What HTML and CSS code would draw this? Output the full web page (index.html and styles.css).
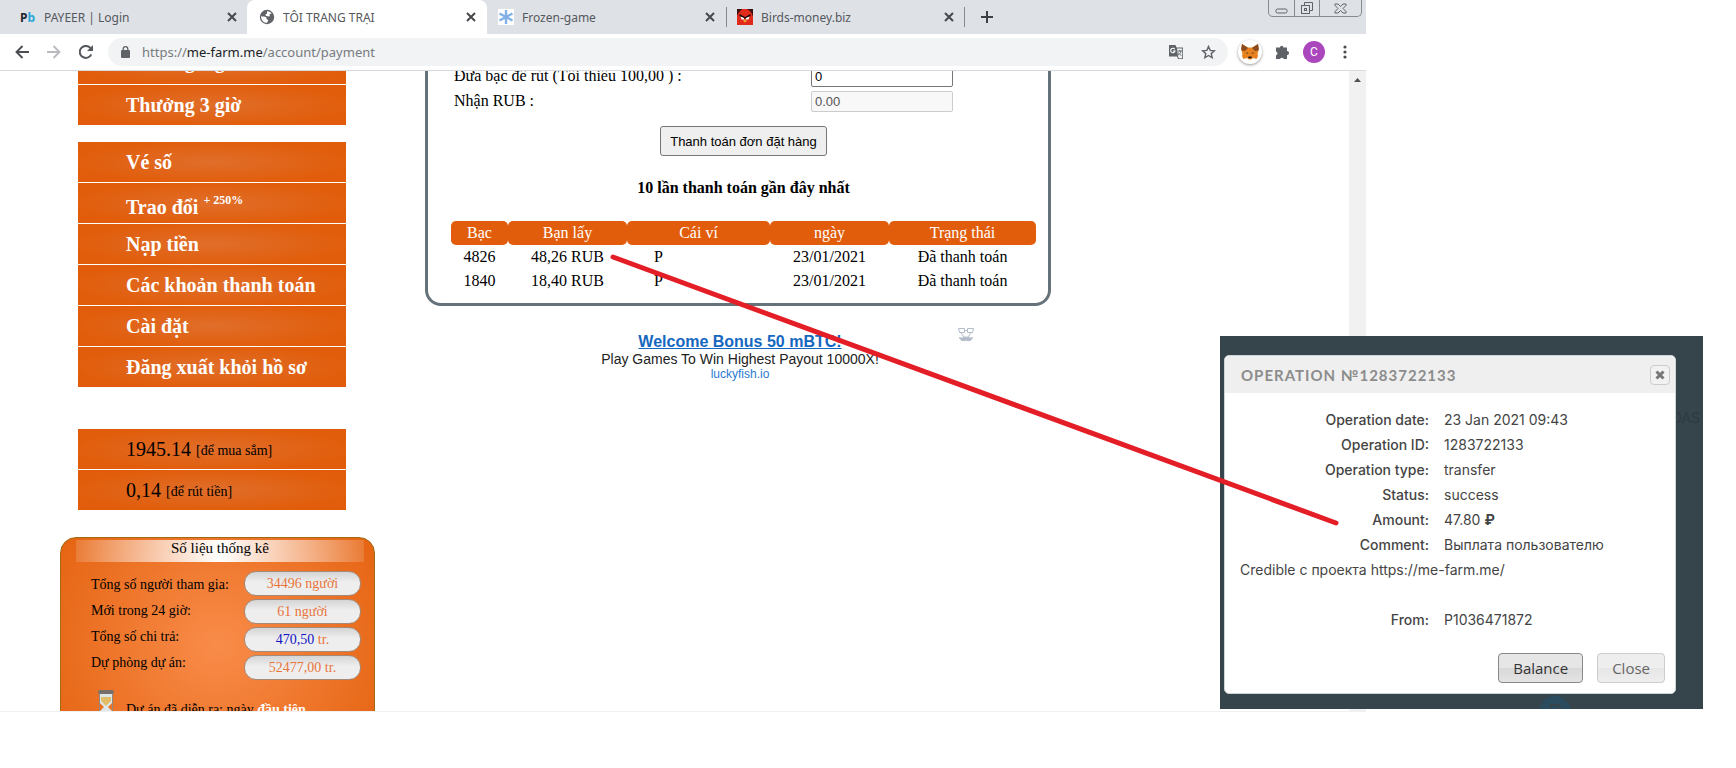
FILE: index.html
```html
<!DOCTYPE html>
<html lang="vi">
<head>
<meta charset="utf-8">
<title>TÔI TRANG TRẠI</title>
<link rel="stylesheet" href="styles.css">
</head>
<body>
<div class="canvas">
  <div class="browser">
    <header class="tabs">
      <div class="tab">
        <span class="favicon pb"><b class="pb-p">P</b><b class="pb-b">b</b></span>
        <span class="tab-title">PAYEER | Login</span>
        <button class="tab-close" aria-label="Close tab"><svg width="10" height="10" viewBox="0 0 10 10"><path d="M1 1l8 8M9 1l-8 8"/></svg></button>
      </div>
      <div class="tab active">
        <svg class="favicon" width="16" height="16" viewBox="0 0 16 16"><circle cx="8" cy="8" r="7.2" fill="#5f6368"/><path d="M2.200 7c1.500 1 3.300.2 4.800 1 .9.600 0 1.500.8 2.300.7.600 1.600.2 1.400 1.300-.1.800-.9 1-1 2.200C4.500 14 1.800 11 2.200 7zM8 2.200c2 0 3.500.8 4.700 2.300-.8.300-1.500 0-2 .7-.4.800.6 1.400-.2 2-.9.600-1.600-.2-2.600-.2-.9 0-1.700-.6-1.300-1.500.3-.7 1.300-.4 1.500-1.200.1-.700-.4-1.300-.1-2.100z" fill="#fff"/></svg>
        <span class="tab-title">TÔI TRANG TRẠI</span>
        <button class="tab-close" aria-label="Close tab"><svg width="10" height="10" viewBox="0 0 10 10"><path d="M1 1l8 8M9 1l-8 8"/></svg></button>
      </div>
      <div class="tab">
        <svg class="favicon" width="16" height="16" viewBox="0 0 16 16"><path fill="#fff" d="M0 0h16v16H0z"/><path d="M8 1v14M1.500 4.500l13 7M14.500 4.500l-13 7" stroke="#82b1e8" stroke-width="2.400"/></svg>
        <span class="tab-title">Frozen-game</span>
        <button class="tab-close" aria-label="Close tab"><svg width="10" height="10" viewBox="0 0 10 10"><path d="M1 1l8 8M9 1l-8 8"/></svg></button>
      </div>
      <div class="tab ruled">
        <svg class="favicon" width="16" height="16" viewBox="0 0 16 16"><path fill="#3b0f0c" d="M0 0h16v16H0z"/><path fill="#e02a1c" d="M0 16V7C2 2 4 2 5 0h5c2 1 5 3 6 8v8z"/><path fill="#1d0a08" d="M2.500 5l5.500 3 5.500-3v2L9 9.500H7L2.500 7z"/><path fill="#fff" d="M3.500 7.500L7 9v1.500H4.500zM12.500 7.500L9 9v1.500h2.500z"/><path fill="#f0a030" d="M8 10l2 2-2 1.500L6 12z"/></svg>
        <span class="tab-title">Birds-money.biz</span>
        <button class="tab-close" aria-label="Close tab"><svg width="10" height="10" viewBox="0 0 10 10"><path d="M1 1l8 8M9 1l-8 8"/></svg></button>
      </div>
      <button class="new-tab" aria-label="New tab"><svg width="12" height="12" viewBox="0 0 12 12"><path d="M6 0v12M0 6h12" stroke="#3c4043" stroke-width="2"/></svg></button>
      <div class="window-buttons">
        <button class="wb" aria-label="Minimize"><svg width="13" height="6" viewBox="0 0 13 6"><rect x="1" y="1" width="11" height="4" rx="1.500"/></svg></button>
        <button class="wb" aria-label="Restore"><svg width="14" height="13" viewBox="0 0 14 13"><path d="M4.500 3.500v-3h8v8h-3"/><rect x="1.500" y="3.500" width="8" height="8"/><rect x="4.500" y="6.500" width="2" height="2"/></svg></button>
        <button class="wb wide" aria-label="Close window"><svg width="13" height="11" viewBox="0 0 13 11"><path d="M1 1h3l2.500 2.500L9 1h3v1.500L9 5.500l3 3V10H9L6.500 7.500 4 10H1V8.500l3-3-3-3z"/></svg></button>
      </div>
    </header>
    <div class="toolbar">
      <button class="icon-btn" aria-label="Back"><svg width="14" height="14" viewBox="0 0 14 14"><path d="M14 7H1.500M7.500 1L1.500 7l6 6" fill="none" stroke="#4a4d51" stroke-width="1.900"/></svg></button>
      <button class="icon-btn" aria-label="Forward"><svg width="14" height="14" viewBox="0 0 14 14"><path d="M0 7h12.500M6.500 1l6 6-6 6" fill="none" stroke="#b9bbbe" stroke-width="1.900"/></svg></button>
      <button class="icon-btn" aria-label="Reload"><svg width="14" height="14" viewBox="0 0 14 14"><path d="M12.300 9.300A6 6 0 1 1 11.500 3.200" fill="none" stroke="#55585c" stroke-width="2"/><path d="M14 0v6H8z" fill="#55585c"/></svg></button>
      <div class="address">
        <svg class="lock" width="9" height="12" viewBox="0 0 9 12"><rect y="4" width="9" height="8" rx="1" fill="#5f6368"/><path d="M2.200 5V3a2.300 2.300 0 0 1 4.600 0v2" fill="none" stroke="#5f6368" stroke-width="1.300"/></svg>
        <span class="url">https://<span class="host">me-farm.me</span>/account/payment</span>
        <svg width="15" height="15" viewBox="0 0 15 15"><path d="M0 0h6.500l1 2.500H14v11.500H9L8 11.500H0z" fill="#5f6368"/><path d="M8 3.500h5.200v9.700H9.700L9 11z" fill="#f1f3f4"/><path d="M5.700 4.200A2.200 2.200 0 1 0 6 6H4" fill="none" stroke="#fff" stroke-width="1.100"/><path d="M8.500 6h4.500M10.800 5v1M12 6c-.4 2-1.500 3.300-3 4M9.500 7.500c.6 1.500 1.600 2.200 2.900 3" fill="none" stroke="#5f6368"/></svg>
        <button class="icon-btn star" aria-label="Bookmark this page"><svg width="15" height="14" viewBox="0 0 15 14"><path d="M7.500 1.500l1.700 3.900 4.200.4-3.200 2.800 1 4.100-3.700-2.200-3.700 2.200 1-4.100L1.600 5.800l4.200-.4z" fill="none" stroke="#5f6368" stroke-width="1.400"/></svg></button>
      </div>
      <button class="fox" aria-label="MetaMask"><svg width="18" height="16" viewBox="0 0 18 16"><path d="M1 0l6 3.500h4L17 0l.8 5-1.300 5 .6 2-1.600 3-3.500-1-2 1.500H8L6 14l-3.500 1L.9 12l.6-2L.2 5z" fill="#e8821e"/><path d="M1 0l6 4-3 3-3.500-.5L.2 5zM17 0l-6 4 3 3 3.500-.5.3-1.500z" fill="#8a4a20"/><path d="M4.500 8.500l2.500.3.200 1.200zM13.500 8.500l-2.500.3-.2 1.200z" fill="#333"/><path d="M7.500 12.500h3l.4 1.800H7.100z" fill="#1b1b1b"/></svg></button>
      <button class="icon-btn" aria-label="Extensions"><svg width="15" height="15" viewBox="0 0 15 15"><path d="M5 2.500a1.700 1.700 0 0 1 3.400 0H12V6a2 2 0 0 1 0 4.200V14H8.700a1.900 1.900 0 0 0-3.600 0H1v-3.800a1.900 1.900 0 0 0 0-3.700V2.500z" fill="#5f6368"/></svg></button>
      <button class="avatar">C</button>
      <button class="icon-btn" aria-label="Menu"><svg width="4" height="14" viewBox="0 0 4 14" fill="#4a4d51"><circle cx="2" cy="2" r="1.600"/><circle cx="2" cy="7" r="1.600"/><circle cx="2" cy="12" r="1.600"/></svg></button>
    </div>
    <div class="viewport">
      <div class="page">
        <aside class="sidebar">
          <nav class="menu first">
            <a href="#">Thưởng 1 giờ</a>
            <a href="#">Thưởng 3 giờ</a>
          </nav>
          <nav class="menu">
            <a href="#">Vé số</a>
            <a class="with-note" href="#"><span>Trao đổi <sup>+ 250%</sup></span></a>
            <a href="#">Nạp tiền</a>
            <a href="#">Các khoản thanh toán</a>
            <a href="#">Cài đặt</a>
            <a href="#">Đăng xuất khỏi hồ sơ</a>
          </nav>
          <div class="menu balance">
            <p>1945.14 <small>[để mua sắm]</small></p>
            <p>0,14 <small>[để rút tiền]</small></p>
          </div>
          <section class="stats">
            <h2>Số liệu thống kê</h2>
            <div class="stats-body">
              <div class="stat-names">
                <span>Tổng số người tham gia:</span>
                <span>Mới trong 24 giờ:</span>
                <span>Tổng số chi trả:</span>
                <span>Dự phòng dự án:</span>
              </div>
              <div class="stat-values">
                <span>34496 người</span>
                <span>61 người</span>
                <span><i>470,50</i> tr.</span>
                <span>52477,00 tr.</span>
              </div>
            </div>
            <div class="age">
              <svg width="18" height="34" viewBox="0 0 18 34"><path d="M2 3h14v9l-5 5 5 5v9H2v-9l5-5-5-5z" fill="#dfe6e8"/><path d="M4 7h10v4l-5 5-5-5z" fill="#e2bd68"/><path d="M4 27l5-7 5 7z" fill="#eef8ff"/><rect x="1" width="16" height="4" rx="2" fill="#77706a"/><rect x="1" y="30" width="16" height="4" rx="2" fill="#77706a"/><path d="M2.500 4v26M15.500 4v26" stroke="#8c8781"/></svg>
              <span>Dự án đã diễn ra: ngày <b>đầu tiên</b></span>
            </div>
          </section>
        </aside>
        <main class="content">
          <section class="panel">
            <form>
              <div class="field"><label for="amount">Đưa bạc để rút (Tối thiểu 100,00 ) :</label><input id="amount" type="text" value="0"></div>
              <div class="field"><label for="receive">Nhận RUB :</label><input id="receive" type="text" value="0.00" disabled></div>
              <button class="order" type="button">Thanh toán đơn đặt hàng</button>
            </form>
            <h3>10 lần thanh toán gần đây nhất</h3>
            <table>
              <colgroup><col class="c-silver"><col class="c-get"><col class="c-wallet"><col class="c-date"><col></colgroup>
              <thead><tr><th>Bạc</th><th>Bạn lấy</th><th>Cái ví</th><th>ngày</th><th>Trạng thái</th></tr></thead>
              <tbody>
                <tr><td>4826</td><td>48,26 RUB</td><td class="wallet">P</td><td>23/01/2021</td><td>Đã thanh toán</td></tr>
                <tr><td>1840</td><td>18,40 RUB</td><td class="wallet">P</td><td>23/01/2021</td><td>Đã thanh toán</td></tr>
              </tbody>
            </table>
          </section>
          <div class="ad">
            <a class="ad-title" href="#">Welcome Bonus 50 mBTC!</a>
            <span class="ad-text">Play Games To Win Highest Payout 10000X!</span>
            <a class="ad-site" href="#">luckyfish.io</a>
            <svg class="ad-mark" width="16" height="14" viewBox="0 0 16 14" fill="none" stroke="#b3bdca"><path d="M.5.5h6v4h-5zM15.500.5h-6v4h5zM6.500 2.500h3M3 5l3 4M13 5l-3 4"/><path d="M1.500 9.500c2 1.500 3.500-.5 6.500-.5s4.500 2 6.500.5c-.5 3-4 4-6.500 2.500-2.500 1.500-6 .5-6.500-2.500z" fill="#b3bdca"/></svg>
          </div>
        </main>
      </div>
      <div class="scrollbar"><svg width="7" height="4" viewBox="0 0 7 4"><path d="M0 4l3.500-4L7 4z" fill="#505050"/></svg></div>
    </div>
  </div>

  <div class="backdrop">
    <span class="ghost" aria-hidden="true">DAS</span>
    <section class="dialog" role="dialog" aria-labelledby="op-title">
      <header class="dialog-head">
        <h2 id="op-title">OPERATION №1283722133</h2>
        <button class="dialog-x" aria-label="Close"><svg width="10" height="10" viewBox="0 0 10 10"><path d="M1.500 1.500l7 7M8.500 1.500l-7 7" stroke="#777" stroke-width="3"/></svg></button>
      </header>
      <dl class="details">
        <dt>Operation date:</dt><dd>23 Jan 2021 09:43</dd>
        <dt>Operation ID:</dt><dd>1283722133</dd>
        <dt>Operation type:</dt><dd>transfer</dd>
        <dt>Status:</dt><dd>success</dd>
        <dt>Amount:</dt><dd>47.80 <b>₽</b></dd>
        <dt>Comment:</dt><dd>Выплата пользователю</dd>
        <dd class="full">Credible с проекта https://me-farm.me/</dd>
        <dt>From:</dt><dd>P1036471872</dd>
      </dl>
      <footer class="dialog-foot">
        <button class="btn primary">Balance</button>
        <button class="btn">Close</button>
      </footer>
    </section>
    <svg class="ghost-badge" width="32" height="13" viewBox="0 0 32 13"><circle cx="16" cy="16" r="16" fill="#2b4c5e"/><path d="M12 13V9h6q3 0 3 4" fill="none" stroke="#36444b" stroke-width="2"/></svg>
  </div>

  <svg class="pointer" width="734" height="276" viewBox="0 0 734 276" aria-hidden="true"><path d="M5 5L728 271" stroke="#e31e26" stroke-width="5" stroke-linecap="round"/></svg>
</div>
</body>
</html>
```
FILE: styles.css
```css
* { box-sizing: border-box; }
body { margin: 0; background: #fff; font-family: "Liberation Serif", "Times New Roman", serif; color: #000; }
button { border: 0; padding: 0; background: none; font: inherit; color: inherit; }
h2, h3, p, dl, dd { margin: 0; }
svg { display: block; flex: none; }

.canvas { position: relative; height: 100vh; padding: 0 370px 56px 0; overflow: hidden; }
.browser { height: 100%; display: flex; flex-direction: column; border-bottom: 1px solid #f0f0f2; }

/* Tab strip */
.tabs { display: flex; height: 34px; flex: none; background: #dee1e6; font: 12px "Noto Sans", sans-serif; color: #55585c; }
.tab { display: flex; align-items: center; width: 239px; height: 34px; padding: 0 11px 0 11px; }
.tab:first-child { width: 247px; padding: 0 10px 0 20px; }
.tab.active { width: 240px; padding-left: 12px; background: #fff; border-radius: 8px 8px 0 0; }
.tab.ruled { position: relative; }
.tab.ruled::before, .tab.ruled::after { content: ""; position: absolute; top: 7px; left: 0; width: 1px; height: 20px; background: #85888c; }
.tab.ruled::after { left: auto; right: 0; }
.favicon { width: 16px; height: 16px; margin-right: 8px; }
.pb { display: flex; align-items: center; font-size: 12px; }
.pb-p { color: #23272e; }
.pb-b { color: #2aa5d8; }
.tab-title { flex: 1; white-space: nowrap; }
.tab-close { stroke: #45484c; stroke-width: 2; }
.new-tab { padding: 0 16px; }
.window-buttons { display: flex; height: 17px; margin: 0 4px 0 auto; border: 1px solid #86898d; border-top: 0; border-radius: 0 0 5px 5px; }
.wb { display: flex; align-items: center; justify-content: center; width: 25px; fill: none; stroke: #5f6368; }
.wb:first-child { padding-top: 5px; }
.wb + .wb { border-left: 1px solid #86898d; }
.wide { width: 42px; }

/* Toolbar */
.toolbar { display: flex; align-items: center; flex: none; height: 37px; padding: 0 19px 0 15px; gap: 18px; border-bottom: 1px solid #d8dadd; }
.address { display: flex; align-items: center; flex: 1; height: 28px; margin: 0 -8px 0 -3px; padding: 0 12px 0 13px; border-radius: 14px; background: #f1f3f4; font: 13px "Noto Sans", sans-serif; color: #777b80; }
.lock { margin-right: 12px; }
.url { flex: 1; }
.host { color: #202124; }
.star { margin-left: 17px; }
.fox { display: flex; align-items: center; justify-content: center; width: 24px; height: 24px; border-radius: 50%; box-shadow: 0 1px 3px #9a9a9a; }
.toolbar .fox { margin-right: -5px; }
.avatar { width: 22px; height: 22px; margin: 0 0 0 -5px; border-radius: 50%; background: #ab47bc; color: #fff; font: 12px Roboto, sans-serif; }

/* Page */
.viewport { display: flex; flex: 1; min-height: 0; overflow: hidden; }
.page { display: flex; flex: 1; gap: 50px; padding-left: 60px; }
.scrollbar { display: flex; justify-content: center; width: 17px; padding-top: 7px; background: #f1f1f1; }
.sidebar { flex: none; width: 315px; }
.menu { display: flex; flex-direction: column; gap: 1px; width: 268px; margin: 0 0 17px 18px; font-size: 20px; }
.menu.first { margin-top: -27px; }
.menu a, .menu p { display: flex; align-items: center; height: 40px; padding: 1px 0 0 48px; background: radial-gradient(ellipse at center, #e06e2a, #e15d0b 75%); }
.menu a { color: #fff; font-weight: bold; text-decoration: none; }
.menu.first a:first-child { padding: 0 0 6px 48px; }
.menu .with-note { padding-top: 7px; }
.menu sup { font-size: 12px; line-height: 12px; vertical-align: 10px; }
.menu.balance { margin-top: 42px; margin-bottom: 27px; }
.balance p { gap: 5px; }
.balance small { font-size: 14px; padding-top: 3px; }

.stats { height: 240px; padding-top: 2px; border: 1px solid #a06a10; border-radius: 16px; background: radial-gradient(ellipse 210px 200px at 50% 45%, #f98c4a, #e3600c); }
.stats h2 { margin: 0 10px 0 15px; line-height: 17px; padding-bottom: 5px; text-align: center; font-size: 15px; font-weight: normal; background: linear-gradient(90deg, #ffffff22, #fff 50%, #ffffff22); }
.stats-body { display: flex; justify-content: space-between; padding: 9px 13px 0 30px; font-size: 14px; }
.stat-names { display: flex; flex-direction: column; line-height: 26px; padding-top: 1px; }
.stat-values { display: flex; flex-direction: column; gap: 3px; }
.stat-values span { width: 117px; line-height: 23px; border: 1px solid #a48a78; border-radius: 12px; text-align: center; color: #e8743a; background: linear-gradient(#d4d4d4, #eee 45%); }
.stat-values i { font-style: normal; color: #1212c8; }
.age { display: flex; gap: 11px; padding: 10px 0 0 36px; font-size: 14px; }
.age span { padding-top: 12px; }
.age b { color: #fff; }

.content { flex: 1; max-width: 626px; }
.panel { margin-top: -20px; padding: 10px 12px 10px 23px; border: 3px solid #65727a; border-radius: 16px; }
.field { display: grid; grid-template-columns: 357px 142px; align-items: center; height: 24px; margin: 0 0 1px 3px; }
.field input { width: 142px; height: 21px; padding: 0 3px; border: 1px solid #767676; border-radius: 2px; background: #fff; font: 13px "Liberation Sans", Arial, sans-serif; }
.field input:disabled { border-color: #ccc; background: #f8f8f8; color: #545454; }
.order { display: block; margin: 13px auto 22px; height: 30px; padding: 0 9px; border: 1px solid #767676; border-radius: 3px; background: #efefef; font: 13px "Liberation Sans", Arial, sans-serif; }
.panel h3 { text-align: center; font-size: 16px; line-height: 20px; margin-bottom: 23px; }
.panel table { width: 100%; table-layout: fixed; border-collapse: separate; border-spacing: 0; text-align: center; line-height: 24px; }
.panel th, .panel td { padding: 0; height: 24px; font-size: 16px; font-weight: normal; }
.panel th { background: #e15d0b; color: #fff; border-radius: 5px; }
.c-silver { width: 57px; }
.c-get, .c-date { width: 119px; }
.c-wallet { width: 143px; }
.panel .wallet { text-align: left; padding-left: 27px; }

.ad { position: relative; display: flex; flex-direction: column; align-items: center; padding: 26px 0 0 4px; font-family: "Liberation Sans", Arial, sans-serif; }
.ad-title { font-size: 16px; line-height: 19px; font-weight: bold; color: #1567c0; }
.ad-text { font-size: 14px; line-height: 16px; color: #222; }
.ad-site { font-size: 12px; line-height: 14px; color: #2a7ad0; text-decoration: none; }
.ad-mark { position: absolute; top: 22px; right: 77px; }

/* Operation details window */
.backdrop { position: absolute; top: 336px; right: 33px; width: 483px; padding: 19px 27px 0 4px; background: #36444b; font-family: Inter, sans-serif; }
.ghost { position: absolute; top: 73px; right: 3px; font-size: 14px; color: #2d3b42; }
.ghost-badge { margin: 2px 0 0 315px; }
.dialog { position: relative; border: 1px solid #cdd5d6; border-radius: 5px; background: #fff; color: #444; overflow: hidden; }
.dialog-head { display: flex; align-items: center; justify-content: space-between; height: 37px; padding: 0 5px 0 16px; background: #efefef; }
.dialog-head h2 { font: bold 15px Lato, sans-serif; letter-spacing: 1px; color: #8c8c8c; }
.dialog-x { display: flex; align-items: center; justify-content: center; width: 20px; height: 20px; border: 1px solid #ccc; border-radius: 4px; background: #f2f2f2; }
.details { display: grid; grid-template-columns: 189px 1fr; column-gap: 15px; padding: 14px 15px 0 15px; font-size: 14px; line-height: 25px; }
.details dt { text-align: right; font-weight: 500; }
.details .full { grid-column: 1 / -1; margin-bottom: 25px; }
.dialog-foot { display: flex; justify-content: flex-end; gap: 14px; padding: 21px 10px 10px; }
.btn { height: 30px; padding: 0 14px; border: 1px solid #ccc; border-radius: 4px; background: linear-gradient(#eee 50%, #e6e6e6 50%, #eee); font: 15px "Open Sans", sans-serif; color: #666; }
.btn.primary { border-color: #888; background: linear-gradient(#e6e6e6 50%, #d8d8d8 50%, #e4e4e4); color: #333; }

.pointer { position: absolute; left: 608px; top: 252px; pointer-events: none; }
```
